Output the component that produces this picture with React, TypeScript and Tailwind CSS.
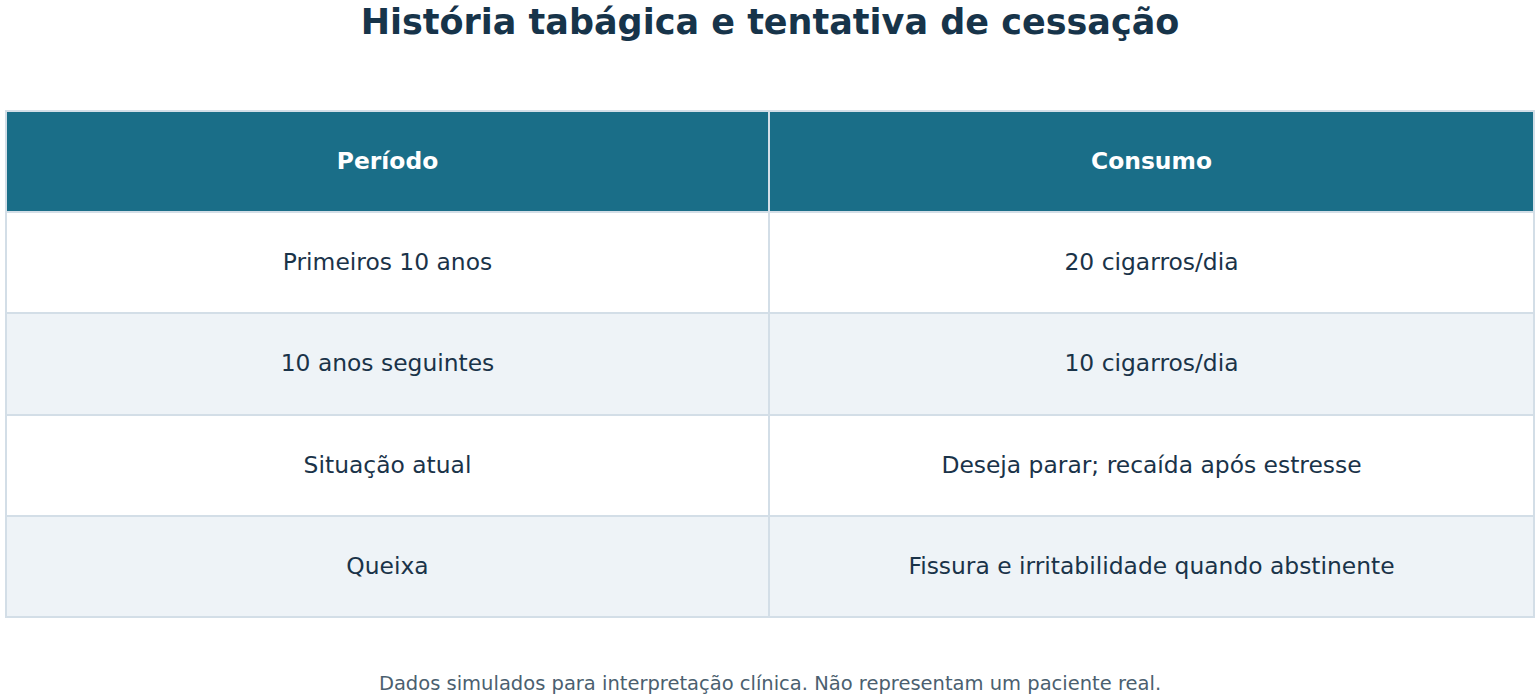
const rows = [
  ["Primeiros 10 anos", "20 cigarros/dia"],
  ["10 anos seguintes", "10 cigarros/dia"],
  ["Situação atual", "Deseja parar; recaída após estresse"],
  ["Queixa", "Fissura e irritabilidade quando abstinente"],
];

export default function App() {
  return (
    <div
      className="w-[1540px] h-[700px] bg-white overflow-hidden"
      style={{ fontFamily: '"DejaVu Sans", sans-serif' }}
    >
      <h1 className="h-[45px] flex items-center justify-center text-[35px] font-bold text-[#17344a] leading-none">
        História tabágica e tentativa de cessação
      </h1>

      {/* Table */}
      <div className="mx-[5px] mt-[65px] border-2 border-[#d3dee7]">
        <div className="grid grid-cols-2 bg-[#1a6e88] h-[99px]">
          <div className="flex items-center justify-center text-[23.4px] font-bold text-white border-r-2 border-[#d3dee7]">
            Período
          </div>
          <div className="flex items-center justify-center text-[23.4px] font-bold text-white">
            Consumo
          </div>
        </div>
        {rows.map(([a, b], i) => (
          <div
            key={a}
            className={
              "grid grid-cols-2 h-[101.3px] border-t-2 border-[#d3dee7] text-[23.4px] text-[#1a3349] " +
              (i % 2 === 1 ? "bg-[#eef3f7]" : "bg-white")
            }
          >
            <div className="flex items-center justify-center border-r-2 border-[#d3dee7]">{a}</div>
            <div className="flex items-center justify-center">{b}</div>
          </div>
        ))}
      </div>

      <p className="mt-[51px] text-center text-[19.5px] text-[#4b5f6f]">
        Dados simulados para interpretação clínica. Não representam um paciente real.
      </p>
    </div>
  );
}
